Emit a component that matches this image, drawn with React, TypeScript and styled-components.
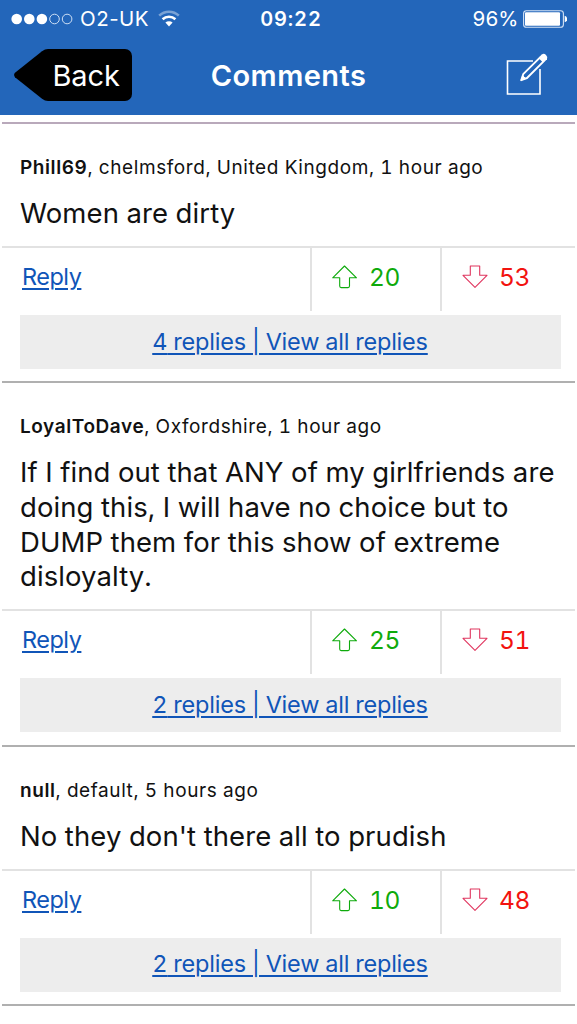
import React from 'react';
import styled, { createGlobalStyle } from 'styled-components';

interface CommentData {
  author: string;
  details: string;
  text: string;
  up: number;
  down: number;
  replies: number;
}

const colors = {
  header: '#2366ba',
  link: '#1055b8',
  up: '#0eaa0c',
  down: '#f2130f',
  downArrow: '#e0365f',
  line: '#e2e2e2',
  separator: '#b0b0b0',
  box: '#ededed',
};

const comments: CommentData[] = [
  {
    author: 'Phill69',
    details: 'chelmsford, United Kingdom, 1 hour ago',
    text: 'Women are dirty',
    up: 20,
    down: 53,
    replies: 4,
  },
  {
    author: 'LoyalToDave',
    details: 'Oxfordshire, 1 hour ago',
    text: 'If I find out that ANY of my girlfriends are doing this, I will have no choice but to DUMP them for this show of extreme disloyalty.',
    up: 25,
    down: 51,
    replies: 2,
  },
  {
    author: 'null',
    details: 'default, 5 hours ago',
    text: 'No they don\'t there all to prudish',
    up: 10,
    down: 48,
    replies: 2,
  },
];

const GlobalStyle = createGlobalStyle`
  * {
    box-sizing: border-box;
  }
  body {
    margin: 0;
    background: #fff;
    color: #111;
    font-family: Inter, "Liberation Sans", sans-serif;
    font-variant-numeric: tabular-nums;
  }
`;

const Screen = styled.div`
  width: 577px;
  height: 1024px;
  overflow: hidden;
  background: #fff;
`;

const Header = styled.header`
  height: 115px;
  background: ${colors.header};
  color: #fff;
`;

const StatusBar = styled.div`
  display: grid;
  grid-template-columns: 1fr auto 1fr;
  align-items: center;
  height: 37px;
  padding: 0 10px 0 11px;
`;

const StatusLeft = styled.div`
  display: flex;
  align-items: center;
`;

const StatusRight = styled(StatusLeft)`
  justify-content: flex-end;
  gap: 5px;
`;

const Carrier = styled.span`
  margin: 0 9px 0 7px;
  font-size: 20.5px;
  font-variant-numeric: normal;
  letter-spacing: .5px;
`;

const Clock = styled.span`
  padding-left: 4px;
  font-size: 20px;
  font-weight: 600;
  letter-spacing: .9px;
`;

const Percent = styled.span`
  font-size: 20.5px;
  letter-spacing: -.3px;
`;

const NavBar = styled.div`
  display: grid;
  grid-template-columns: 1fr auto 1fr;
  align-items: center;
  height: 76px;
  padding: 0 14px;
`;

const BackButton = styled.button`
  display: grid;
  width: 118px;
  height: 52px;
  padding: 0;
  border: 0;
  background: none;
  color: #fff;
  font: 400 29px Inter, "Liberation Sans", sans-serif;
  letter-spacing: -.1px;
  & > * {
    grid-area: 1 / 1;
  }
`;

const BackLabel = styled.span`
  align-self: center;
  padding: 1px 0 0 38.5px;
  text-align: left;
`;

const Title = styled.h1`
  margin: 0;
  padding-top: 1px;
  font-size: 29px;
  font-weight: 600;
  letter-spacing: .45px;
`;

const ComposeButton = styled.button`
  justify-self: end;
  display: flex;
  margin: 0 15px 1px 0;
  padding: 0;
  border: 0;
  background: none;
`;

const List = styled.main`
  margin: 7px 2px 0;
  border-top: 2px solid #b9a9bb;
`;

const CommentItem = styled.article`
  display: flex;
  flex-direction: column;
  border-bottom: 2px solid ${colors.separator};
`;

const Meta = styled.p`
  margin: 0;
  padding: 32px 18px 0;
  font-size: 19px;
  line-height: 24px;
  letter-spacing: .58px;
  b {
    font-weight: 600;
  }
`;

const Text = styled.p`
  margin: 0;
  padding: 16px 16px 15.33px 18px;
  font-size: 27.5px;
  line-height: 34.67px;
  letter-spacing: .09px;
`;

const Actions = styled.div`
  display: grid;
  grid-template-columns: 1fr 130px 135px;
  height: 65px;
  border-top: 2px solid ${colors.line};
`;

const Link = styled.a`
  color: ${colors.link};
  font-size: 23.5px;
  letter-spacing: -.22px;
  text-decoration: underline;
  text-decoration-thickness: 2px;
  text-underline-offset: 3px;
`;

const ReplyCell = styled.div`
  padding: 14px 0 0 20px;
  a {
    letter-spacing: -.5px;
  }
`;

const Vote = styled.div<{ $color: string }>`
  display: flex;
  align-items: flex-start;
  gap: 11px;
  padding: 14px 0 0 20px;
  border-left: 2px solid ${colors.line};
  color: ${props => props.$color};
  font-size: 24.5px;
  line-height: 30px;
  letter-spacing: -.3px;
  svg {
    margin-top: 3px;
  }
`;

const Replies = styled.div`
  display: flex;
  align-items: center;
  justify-content: center;
  height: 54px;
  margin: 4px 14px 12.33px 18px;
  padding: 0 1px 1.5px 0;
  background: ${colors.box};
`;

const SignalDots = () => (
  <svg width="62" height="12" viewBox="0 0 62 12">
    {[ 0, 1, 2, 3, 4 ].map(i => i < 3
      ? <circle key={i} cx={5.7 + i * 12.6} cy="6" r="5.3" fill="#fff" />
      : <circle key={i} cx={5.7 + i * 12.6} cy="6" r="4.8" fill="none" stroke="#cfe0f5" strokeWidth="1" />)}
  </svg>
);

const WifiIcon = () => (
  <svg width="22" height="17" viewBox="0 0 22 17" fill="none">
    <path d="M1.2 5.6a14.2 14.2 0 0 1 19.6 0" stroke="#fff" strokeOpacity=".4" strokeWidth="2.6" />
    <path d="M4.6 9.3a9.3 9.3 0 0 1 12.8 0" stroke="#fff" strokeWidth="2.6" />
    <path d="M11 16.4 7.4 12.6a5.2 5.2 0 0 1 7.2 0z" fill="#fff" />
  </svg>
);

const BatteryIcon = () => (
  <svg width="44" height="18" viewBox="0 0 44 18">
    <rect x=".6" y=".8" width="39.8" height="16.4" rx="2.8" fill="none" stroke="#d3e2f5" strokeWidth="1.1" />
    <rect x="2" y="2.3" width="35" height="13.4" rx="1" fill="#fff" />
    <path d="M41.7 5.8a3.3 3.3 0 0 1 0 6.4z" fill="#fff" />
  </svg>
);

const BackShape = () => (
  <svg width="118" height="52" viewBox="0 0 118 52">
    <path d="M34 0h77a7 7 0 0 1 7 7v38a7 7 0 0 1-7 7H34q-3 0-6-2.2L1 28.2q-1.8-2.2 0-4.4L28 2.2q3-2.2 6-2.2z" />
  </svg>
);

const ComposeIcon = () => (
  <svg width="42" height="43" viewBox="0 0 42 43" fill="none" stroke="#fff">
    <path d="M27 8H1.5v33H34V16" strokeWidth="1.6" />
    <path d="M15.2 27.2 17.2 21.2 33.6 4.8 37.4 8.6 21 25z" strokeWidth="1.9" strokeLinejoin="round" />
    <path d="M15.2 27.2 16.7 22.6 19.6 25.6z" fill="#fff" />
    <path d="M33.2 4 35.8 1.5Q38 0 40 2T41 6.200L38.300 9z" fill="#fff" stroke="none" />
  </svg>
);

const Arrow = ({ color, down }: { color: string; down?: boolean }) => (
  <svg width="26" height="24" viewBox="0 0 26 24" fill="none" stroke={color} strokeWidth="1.1" strokeLinejoin="round">
    {down
      ? <path d="M8.3 1h9.400v9.300h7.300L13 22.300 1 10.300h7.300z" />
      : <path d="M12.5 1 24.5 12.800h-7v8.300q0 1.500-1.500 1.500H9.200q-1.500 0-1.500-1.500v-8.300H.7z" />}
  </svg>
);

const Comment = ({ comment }: { comment: CommentData }) => (
  <CommentItem>
    <Meta><b>{comment.author}</b>, {comment.details}</Meta>
    <Text>{comment.text}</Text>
    <Actions>
      <ReplyCell><Link>Reply</Link></ReplyCell>
      <Vote $color={colors.up}><Arrow color={colors.up} />{comment.up}</Vote>
      <Vote $color={colors.down}><Arrow color={colors.downArrow} down />{comment.down}</Vote>
    </Actions>
    <Replies><Link>{comment.replies} replies | View all replies</Link></Replies>
  </CommentItem>
);

const App = () => (
  <Screen>
    <GlobalStyle />
    <Header>
      <StatusBar>
        <StatusLeft>
          <SignalDots />
          <Carrier>O2-UK</Carrier>
          <WifiIcon />
        </StatusLeft>
        <Clock>09:22</Clock>
        <StatusRight>
          <Percent>96%</Percent>
          <BatteryIcon />
        </StatusRight>
      </StatusBar>
      <NavBar>
        <BackButton>
          <BackShape />
          <BackLabel>Back</BackLabel>
        </BackButton>
        <Title>Comments</Title>
        <ComposeButton><ComposeIcon /></ComposeButton>
      </NavBar>
    </Header>
    <List>
      {comments.map(comment => <Comment key={comment.author} comment={comment} />)}
    </List>
  </Screen>
);

export default App;
